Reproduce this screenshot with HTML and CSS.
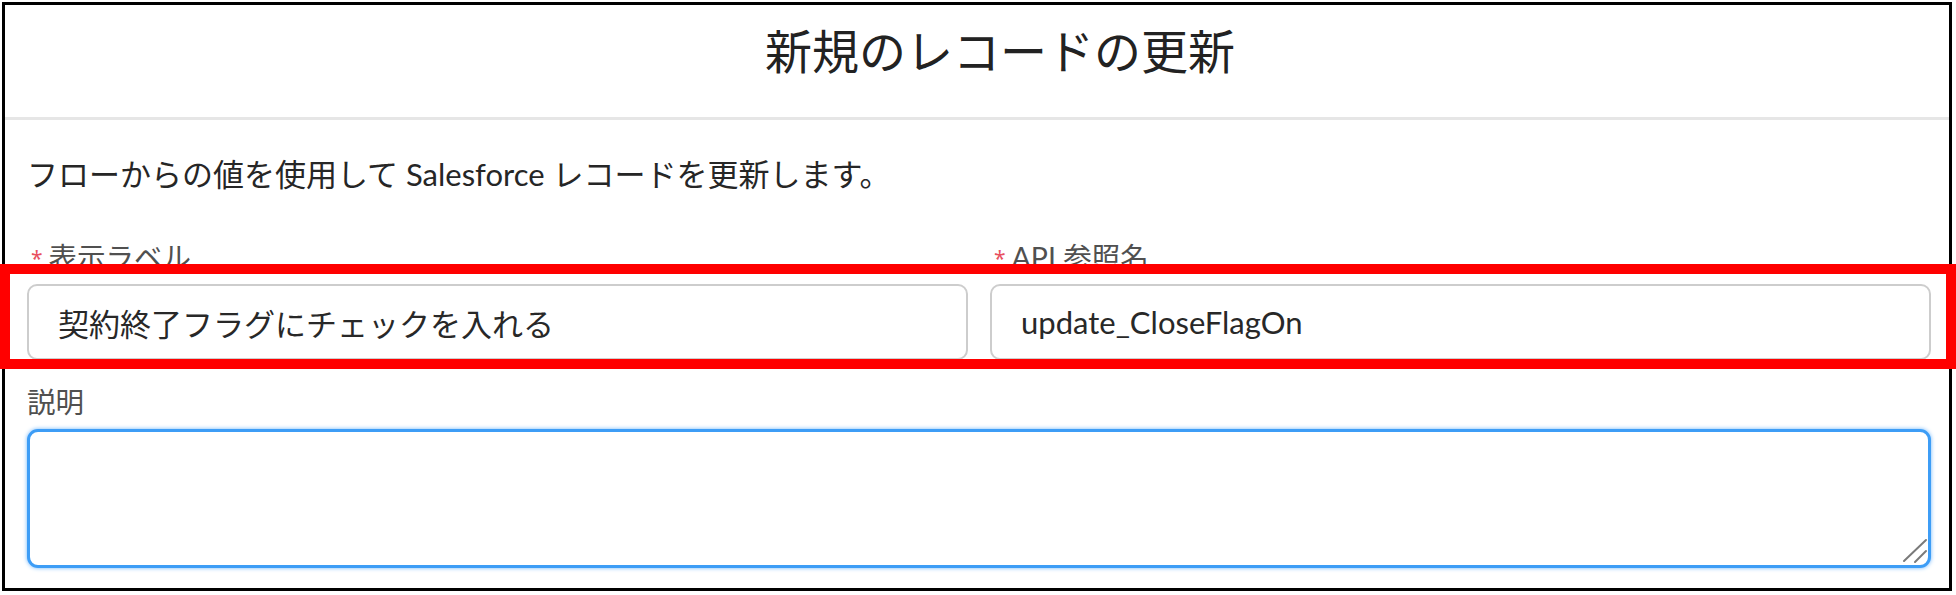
FILE: index.html
```html
<!DOCTYPE html>
<html lang="ja">
<head>
<meta charset="utf-8">
<title>新規のレコードの更新</title>
<link rel="stylesheet" href="styles.css">
</head>
<body>
<div class="frame">
  <header class="header">
    <h1 class="title">新規のレコードの更新</h1>
  </header>
  <div class="content">
    <p class="desc">フローからの値を使用して Salesforce レコードを更新します。</p>
    <div class="fields">
      <div class="field">
        <label class="label"><abbr class="req">*</abbr>表示ラベル</label>
        <input class="input" type="text" value="契約終了フラグにチェックを入れる">
      </div>
      <div class="field">
        <label class="label"><abbr class="req">*</abbr>API 参照名</label>
        <input class="input" type="text" value="update_CloseFlagOn">
      </div>
    </div>
    <label class="label label-desc">説明</label>
    <div class="ta-wrap">
      <textarea class="textarea"></textarea>
      <svg class="resizer" width="26" height="26" viewBox="0 0 26 26">
        <line x1="2" y1="23" x2="24" y2="2" stroke="#7a7a7a" stroke-width="2" stroke-linecap="round"/>
        <line x1="13" y1="24" x2="24" y2="13" stroke="#7a7a7a" stroke-width="2" stroke-linecap="round"/>
      </svg>
    </div>
  </div>
</div>
<div class="highlight"></div>
</body>
</html>
```
FILE: styles.css
```css
html, body {
  margin: 0;
  padding: 0;
  background: #ffffff;
}
body {
  position: relative;
  width: 1956px;
  height: 595px;
  overflow: hidden;
  font-family: Lato, "Noto Sans CJK JP", sans-serif;
  color: #181818;
}
.frame {
  margin: 2px;
  width: 1950px;
  height: 589px;
  box-sizing: border-box;
  border: 3px solid #000000;
  background: #ffffff;
}
.header {
  box-sizing: border-box;
  height: 115px;
  border-bottom: 3px solid #e6e6e6;
  padding: 16px 0 0 46px;
  text-align: center;
}
.title {
  margin: 0;
  font-weight: 400;
  font-size: 47px;
  line-height: 60px;
  color: #222222;
}
.content {
  padding: 34px 18px 0 22px;
}
.desc {
  margin: 0;
  font-size: 31px;
  line-height: 40px;
  color: #262626;
}
.fields {
  margin-top: 45px;
  display: grid;
  grid-template-columns: 1fr 1fr;
  column-gap: 22px;
}
.field {
  display: flex;
  flex-direction: column;
}
.label {
  display: block;
  font-size: 28.5px;
  line-height: 36px;
  color: #505050;
}
.req {
  font-family: "Noto Sans", sans-serif;
  color: #e8505f;
  text-decoration: none;
  font-size: 21px;
  margin: 0 6px 0 4px;
  vertical-align: 2px;
}
.input {
  margin-top: 8px;
  box-sizing: border-box;
  height: 76px;
  width: 100%;
  border: 2px solid #cdcdcd;
  border-radius: 10px;
  padding: 0 0 0 29px;
  font-family: Lato, "Noto Sans CJK JP", sans-serif;
  font-size: 31px;
  color: #282828;
  background: #ffffff;
  outline: none;
}
.label-desc {
  margin-top: 24px;
}
.ta-wrap {
  position: relative;
  margin-top: 9px;
  height: 139px;
}
.textarea {
  display: block;
  box-sizing: border-box;
  width: 100%;
  height: 100%;
  border: 3px solid #3d9df6;
  border-radius: 11px;
  box-shadow: 0 0 4px #6fb6fb;
  resize: none;
  outline: none;
  background: #ffffff;
  font-family: Lato, "Noto Sans CJK JP", sans-serif;
}
.resizer {
  position: absolute;
  right: 3px;
  bottom: 4px;
}
.highlight {
  position: absolute;
  left: 0;
  top: 264px;
  width: 1956px;
  height: 105px;
  box-sizing: border-box;
  border: 10px solid #ff0000;
  pointer-events: none;
}
```
